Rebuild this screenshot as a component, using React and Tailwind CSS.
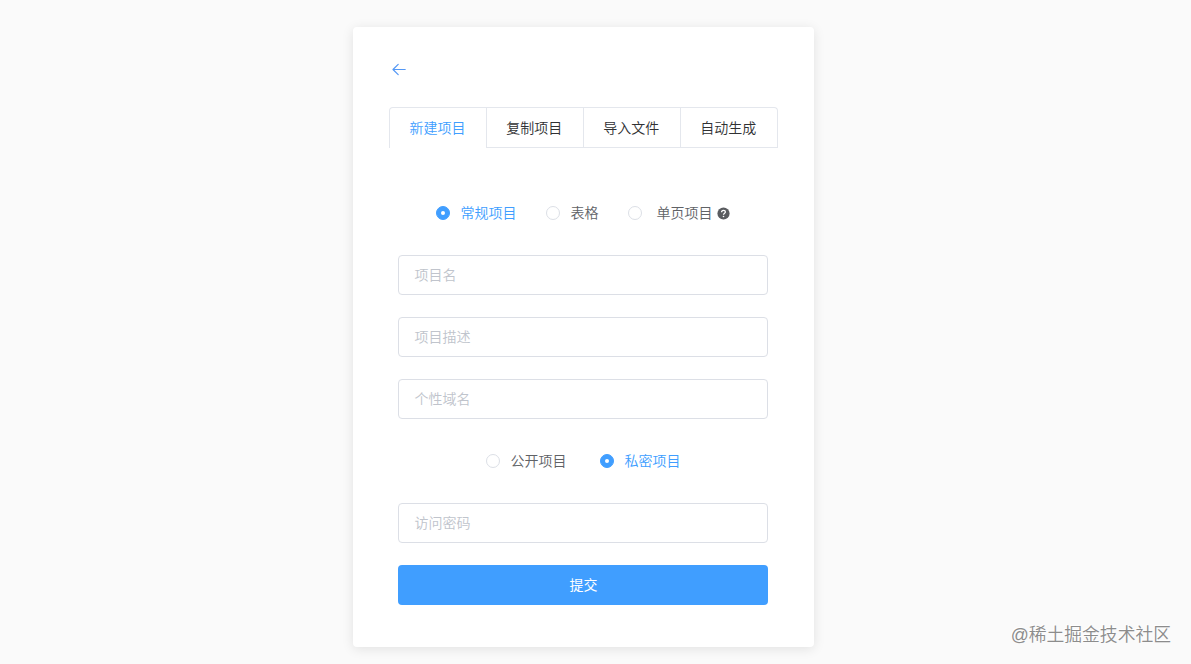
import React, { useState } from 'react';
import clsx from 'clsx';

const tabs = ['新建项目', '复制项目', '导入文件', '自动生成'];

const Radio = ({ label, checked, onSelect, className, children }) => (
  <button
    type="button"
    role="radio"
    aria-checked={checked}
    onClick={onSelect}
    className={clsx('flex items-center leading-5', checked ? 'text-[#409eff]' : 'text-[#606266]', className)}
  >
    <span
      className={clsx(
        'flex h-3.5 w-3.5 items-center justify-center rounded-full border',
        checked ? 'border-[#409eff] bg-[#409eff]' : 'border-[#dcdfe6] bg-white'
      )}
    >
      {checked && <span className="h-1 w-1 rounded-full bg-white"></span>}
    </span>
    <span className="ml-2.5">{label}</span>
    {children}
  </button>
);

const Field = ({ placeholder, type = 'text' }) => (
  <input
    type={type}
    placeholder={placeholder}
    className="block h-10 w-full rounded border border-[#dcdfe6] bg-white px-[15px] text-[#606266] outline-none placeholder:text-[#c0c4cc] focus:border-[#409eff]"
  />
);

const BackIcon = () => (
  <svg width="14" height="14" viewBox="0 0 14 14" fill="none" stroke="#5498f5" strokeWidth="1.2" strokeLinecap="round" strokeLinejoin="round">
    <path d="M13.2 7.5H1M6.2 2.4L1 7.5L6.2 12.6" />
  </svg>
);

const QuestionIcon = () => (
  <svg className="ml-[5px]" width="13" height="13" viewBox="0 0 13 13" fill="none">
    <circle cx="6.5" cy="6.5" r="6.1" fill="#5a5c60" />
    <path d="M4.6 5.3C4.6 4.1 5.4 3.4 6.5 3.4S8.4 4.1 8.4 5.1C8.4 6.2 6.6 6.3 6.5 7.7" stroke="#fff" strokeWidth="1.3" />
    <circle cx="6.5" cy="9.5" r="0.8" fill="#fff" />
  </svg>
);

const App = () => {
  const [tab, setTab] = useState('新建项目');
  const [kind, setKind] = useState('regular');
  const [access, setAccess] = useState('private');

  return (
    <div className="relative h-screen overflow-hidden bg-[#fafafa] pt-[27px] font-['Liberation_Sans','Noto_Sans_CJK_SC',sans-serif] text-sm font-[350]">
      <div className="ml-[353.4px] h-[620px] w-[461px] rounded bg-white px-9 pt-[35px] shadow-[0_2px_12px_0_rgba(0,0,0,0.1)]">
        <button type="button" className="ml-[2.6px] flex h-3.5 w-3.5" aria-label="返回">
          <BackIcon />
        </button>

        <div className="mt-[31px] flex h-[41px] w-[389px] border-b border-[#e4e7ed]">
          <div className="flex h-[41px] rounded-t border-x border-t border-[#e4e7ed]">
            {tabs.map((name, i) => (
              <button
                type="button"
                key={name}
                onClick={() => setTab(name)}
                className={clsx(
                  'h-10 border-b pr-[1.5px] leading-10',
                  i === 0 ? 'w-[95.6px]' : 'w-[97px] border-l border-l-[#e4e7ed]',
                  tab === name ? 'border-b-white text-[#409eff]' : 'border-b-[#e4e7ed] text-[#303133]'
                )}
              >
                {name}
              </button>
            ))}
          </div>
        </div>

        <div className="mx-[9px] w-[370px]">
          <div className="mt-[55px] flex h-5 pl-[38px]">
            <Radio label="常规项目" checked={kind === 'regular'} onSelect={() => setKind('regular')} />
            <Radio className="ml-[30px]" label="表格" checked={kind === 'table'} onSelect={() => setKind('table')} />
            <Radio className="ml-[30px]" label={<span className="ml-1">单页项目</span>} checked={kind === 'single'} onSelect={() => setKind('single')}>
              <QuestionIcon />
            </Radio>
          </div>

          <div className="mt-8 flex flex-col gap-[22px]">
            <Field placeholder="项目名" />
            <Field placeholder="项目描述" />
            <Field placeholder="个性域名" />
            <div className="flex h-10 items-center pl-[88px]">
              <Radio label="公开项目" checked={access === 'public'} onSelect={() => setAccess('public')} />
              <Radio className="ml-[34px]" label="私密项目" checked={access === 'private'} onSelect={() => setAccess('private')} />
            </div>
            <Field type="password" placeholder="访问密码" />
            <button type="button" className="h-10 w-full rounded bg-[#409eff] font-normal text-white">
              提交
            </button>
          </div>
        </div>
      </div>

      <div className="absolute right-5 bottom-[17px] text-[17.8px] leading-6 whitespace-nowrap text-[#8c8c8c] [text-shadow:-1px_-1px_0_#fff]">
        @稀土掘金技术社区
      </div>
    </div>
  );
};

export default App;
